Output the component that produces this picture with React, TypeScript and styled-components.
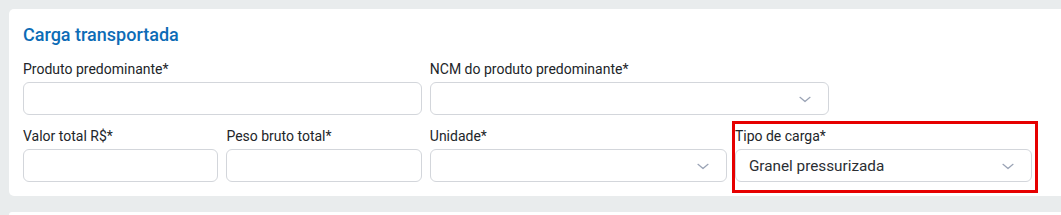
import React from "react";
import styled, { createGlobalStyle } from "styled-components";

const Global = createGlobalStyle`
  html, body { margin: 0; padding: 0; }
  body {
    background: #e9eced;
    font-family: Roboto, "Liberation Sans", Arial, sans-serif;
    overflow: hidden;
  }
`;

const Page = styled.div`
  padding: 9px 0 0 9px;
  display: flex;
  flex-direction: column;
  gap: 16px;
`;

const Card = styled.section`
  background: #ffffff;
  border-radius: 5px 0 0 5px;
  width: 1052px;
  padding: 15px 0 14px 14px;
  box-sizing: border-box;
`;

const NextCard = styled.div`
  background: #ffffff;
  border-radius: 5px 0 0 0;
  width: 1052px;
  height: 3px;
`;

const Title = styled.h2`
  margin: 0 0 15px;
  font-size: 18px;
  line-height: 22px;
  font-weight: 500;
  color: #0d6cb6;
`;

const Grid = styled.div`
  display: grid;
  width: 1009px;
  grid-template-columns: repeat(10, 1fr);
  column-gap: 8px;
  row-gap: 13px;
`;

const Field = styled.div<{ $span: number; $highlight?: boolean }>`
  grid-column: span ${(p) => p.$span};
  display: flex;
  flex-direction: column;
  gap: 5px;
  position: relative;
  ${(p) =>
    p.$highlight &&
    `
    &::after {
      content: "";
      position: absolute;
      left: -3px;
      right: -6px;
      top: -7px;
      bottom: -11px;
      border: 3px solid #e60000;
      pointer-events: none;
    }
  `}
`;

const Label = styled.label`
  font-size: 14px;
  line-height: 16px;
  color: #222529;
`;

const Input = styled.div`
  height: 33px;
  box-sizing: border-box;
  border: 1px solid #d3d6db;
  border-radius: 6px;
  background: #fff;
`;

const Select = styled.div`
  height: 33px;
  box-sizing: border-box;
  border: 1px solid #d3d6db;
  border-radius: 6px;
  background: #fff;
  display: flex;
  align-items: center;
  justify-content: space-between;
  padding: 0 13px 0 13px;
`;

const Value = styled.span`
  font-size: 15.3px;
  color: #2b2e33;
`;

const Chevron = () => (
  <svg width="20" height="20" viewBox="0 0 24 24" fill="none" stroke="#9aa3b5" strokeWidth="1.5" strokeLinecap="round" strokeLinejoin="round">
    <path d="m6 10 6 5 6-5" />
  </svg>
);

export default function App() {
  return (
    <>
      <Global />
      <Page>
        <Card>
          <Title>Carga transportada</Title>
          <Grid>
            <Field $span={4}>
              <Label>Produto predominante*</Label>
              <Input />
            </Field>
            <Field $span={4}>
              <Label>NCM do produto predominante*</Label>
              <Select>
                <Value />
                <Chevron />
              </Select>
            </Field>
            <Field $span={2} />
            <Field $span={2}>
              <Label>Valor total R$*</Label>
              <Input />
            </Field>
            <Field $span={2}>
              <Label>Peso bruto total*</Label>
              <Input />
            </Field>
            <Field $span={3}>
              <Label>Unidade*</Label>
              <Select>
                <Value />
                <Chevron />
              </Select>
            </Field>
            <Field $span={3} $highlight>
              <Label>Tipo de carga*</Label>
              <Select>
                <Value>Granel pressurizada</Value>
                <Chevron />
              </Select>
            </Field>
          </Grid>
        </Card>
        <NextCard />
      </Page>
    </>
  );
}
